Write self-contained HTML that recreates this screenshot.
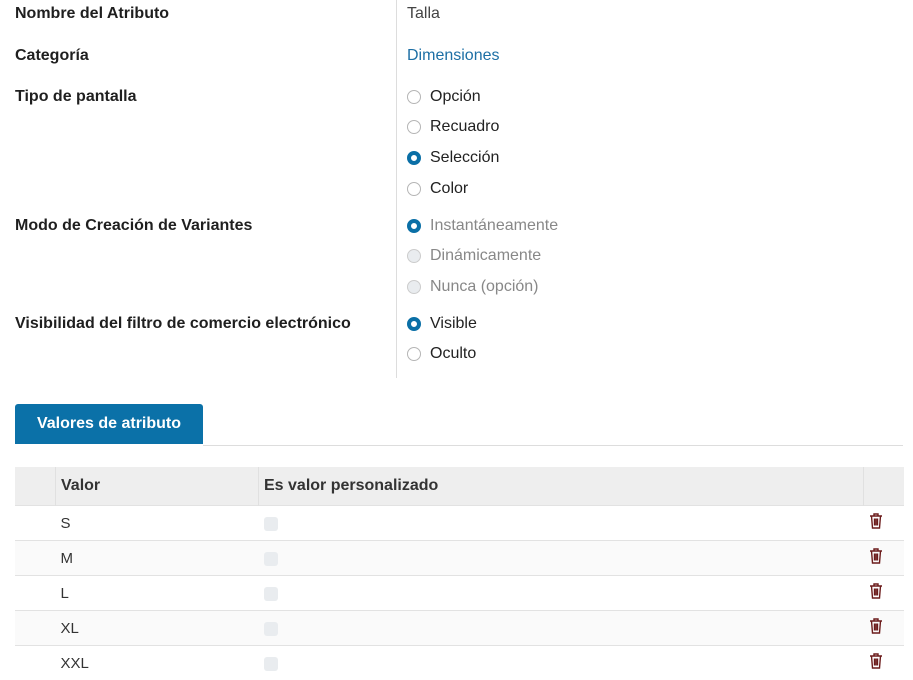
<!DOCTYPE html>
<html><head><style>
body{margin:0;background:#fff;font-family:"Liberation Sans",sans-serif;color:#212529;width:913px;height:678px;overflow:hidden;position:relative}
.lab{position:absolute;left:15px;font-weight:bold;font-size:16px;color:#1f1f1f}
.val{position:absolute;left:407px;font-size:16px;color:#444}
.r{position:absolute;left:407px;font-size:16px;color:#222;display:flex;align-items:center}
.r i{display:inline-block;width:14px;height:14px;border:1px solid #b5b5b5;border-radius:50%;margin-right:9px;box-sizing:border-box}
.r i.on{border:4px solid #0a6fa6}
.r i.dis{background:#e9ecef;border-color:#ccc}
.g{color:#888}
.div{position:absolute;left:396px;top:0;width:1px;height:378px;background:#ddd}
.tab{position:absolute;left:15px;top:404px;width:188px;height:40px;background:#0b71a8;color:#fff;font-weight:bold;font-size:16px;line-height:40px;text-align:center;border-radius:3px 3px 0 0}
.tl{position:absolute;left:203px;top:445px;width:700px;height:1px;background:#ddd}
table{position:absolute;left:15px;top:467px;width:889px;border-collapse:collapse;font-size:15px}
th{background:#eeeeee;height:38px;text-align:left;font-weight:bold;color:#333;padding:0 0 0 5px;border-left:1px solid #e0e0e0;font-size:16px}
th:first-child{border-left:none}
td{height:34px;padding:0 0 0 5px;border-top:1px solid #e2e2e2;background:#fafafa;color:#333}
tr:nth-child(2n) td{background:#fff}
.cb{display:inline-block;width:14px;height:14px;background:#e9ecef;border-radius:3px;vertical-align:middle}
</style></head><body>
<div class="div"></div>
<div class="lab" style="top:5px">Nombre del Atributo</div>
<div class="val" style="top:5px">Talla</div>
<div class="lab" style="top:47px">Categoría</div>
<div class="val" style="top:47px;color:#1d6fa5">Dimensiones</div>
<div class="lab" style="top:88px">Tipo de pantalla</div>
<div class="r" style="top:88px"><i></i>Opción</div>
<div class="r" style="top:118px"><i></i>Recuadro</div>
<div class="r" style="top:149px"><i class="on"></i>Selección</div>
<div class="r" style="top:180px"><i></i>Color</div>
<div class="lab" style="top:217px">Modo de Creación de Variantes</div>
<div class="r g" style="top:217px"><i class="on"></i>Instantáneamente</div>
<div class="r g" style="top:247px"><i class="dis"></i>Dinámicamente</div>
<div class="r g" style="top:278px"><i class="dis"></i>Nunca (opción)</div>
<div class="lab" style="top:315px">Visibilidad del filtro de comercio electrónico</div>
<div class="r" style="top:315px"><i class="on"></i>Visible</div>
<div class="r" style="top:345px"><i></i>Oculto</div>
<div class="tab">Valores de atributo</div>
<div class="tl"></div>
<table>
<tr><th style="width:35px"></th><th style="width:197px">Valor</th><th style="width:599px">Es valor personalizado</th><th></th></tr>
<tr><td></td><td>S</td><td><span class="cb"></span></td><td><svg width="14" height="16" viewBox="0 0 14 16"><path d="M1 3h12M5 3V1h4v2M2.5 3l1 12h7l1-12M5.5 5.5v7M7 5.5v7M8.5 5.5v7" stroke="#6b1a1a" stroke-width="1.4" fill="none"/></svg></td></tr>
<tr><td></td><td>M</td><td><span class="cb"></span></td><td><svg width="14" height="16" viewBox="0 0 14 16"><path d="M1 3h12M5 3V1h4v2M2.5 3l1 12h7l1-12M5.5 5.5v7M7 5.5v7M8.5 5.5v7" stroke="#6b1a1a" stroke-width="1.4" fill="none"/></svg></td></tr>
<tr><td></td><td>L</td><td><span class="cb"></span></td><td><svg width="14" height="16" viewBox="0 0 14 16"><path d="M1 3h12M5 3V1h4v2M2.5 3l1 12h7l1-12M5.5 5.5v7M7 5.5v7M8.5 5.5v7" stroke="#6b1a1a" stroke-width="1.4" fill="none"/></svg></td></tr>
<tr><td></td><td>XL</td><td><span class="cb"></span></td><td><svg width="14" height="16" viewBox="0 0 14 16"><path d="M1 3h12M5 3V1h4v2M2.5 3l1 12h7l1-12M5.5 5.5v7M7 5.5v7M8.5 5.5v7" stroke="#6b1a1a" stroke-width="1.4" fill="none"/></svg></td></tr>
<tr><td></td><td>XXL</td><td><span class="cb"></span></td><td><svg width="14" height="16" viewBox="0 0 14 16"><path d="M1 3h12M5 3V1h4v2M2.5 3l1 12h7l1-12M5.5 5.5v7M7 5.5v7M8.5 5.5v7" stroke="#6b1a1a" stroke-width="1.4" fill="none"/></svg></td></tr>
</table>
</body></html>
